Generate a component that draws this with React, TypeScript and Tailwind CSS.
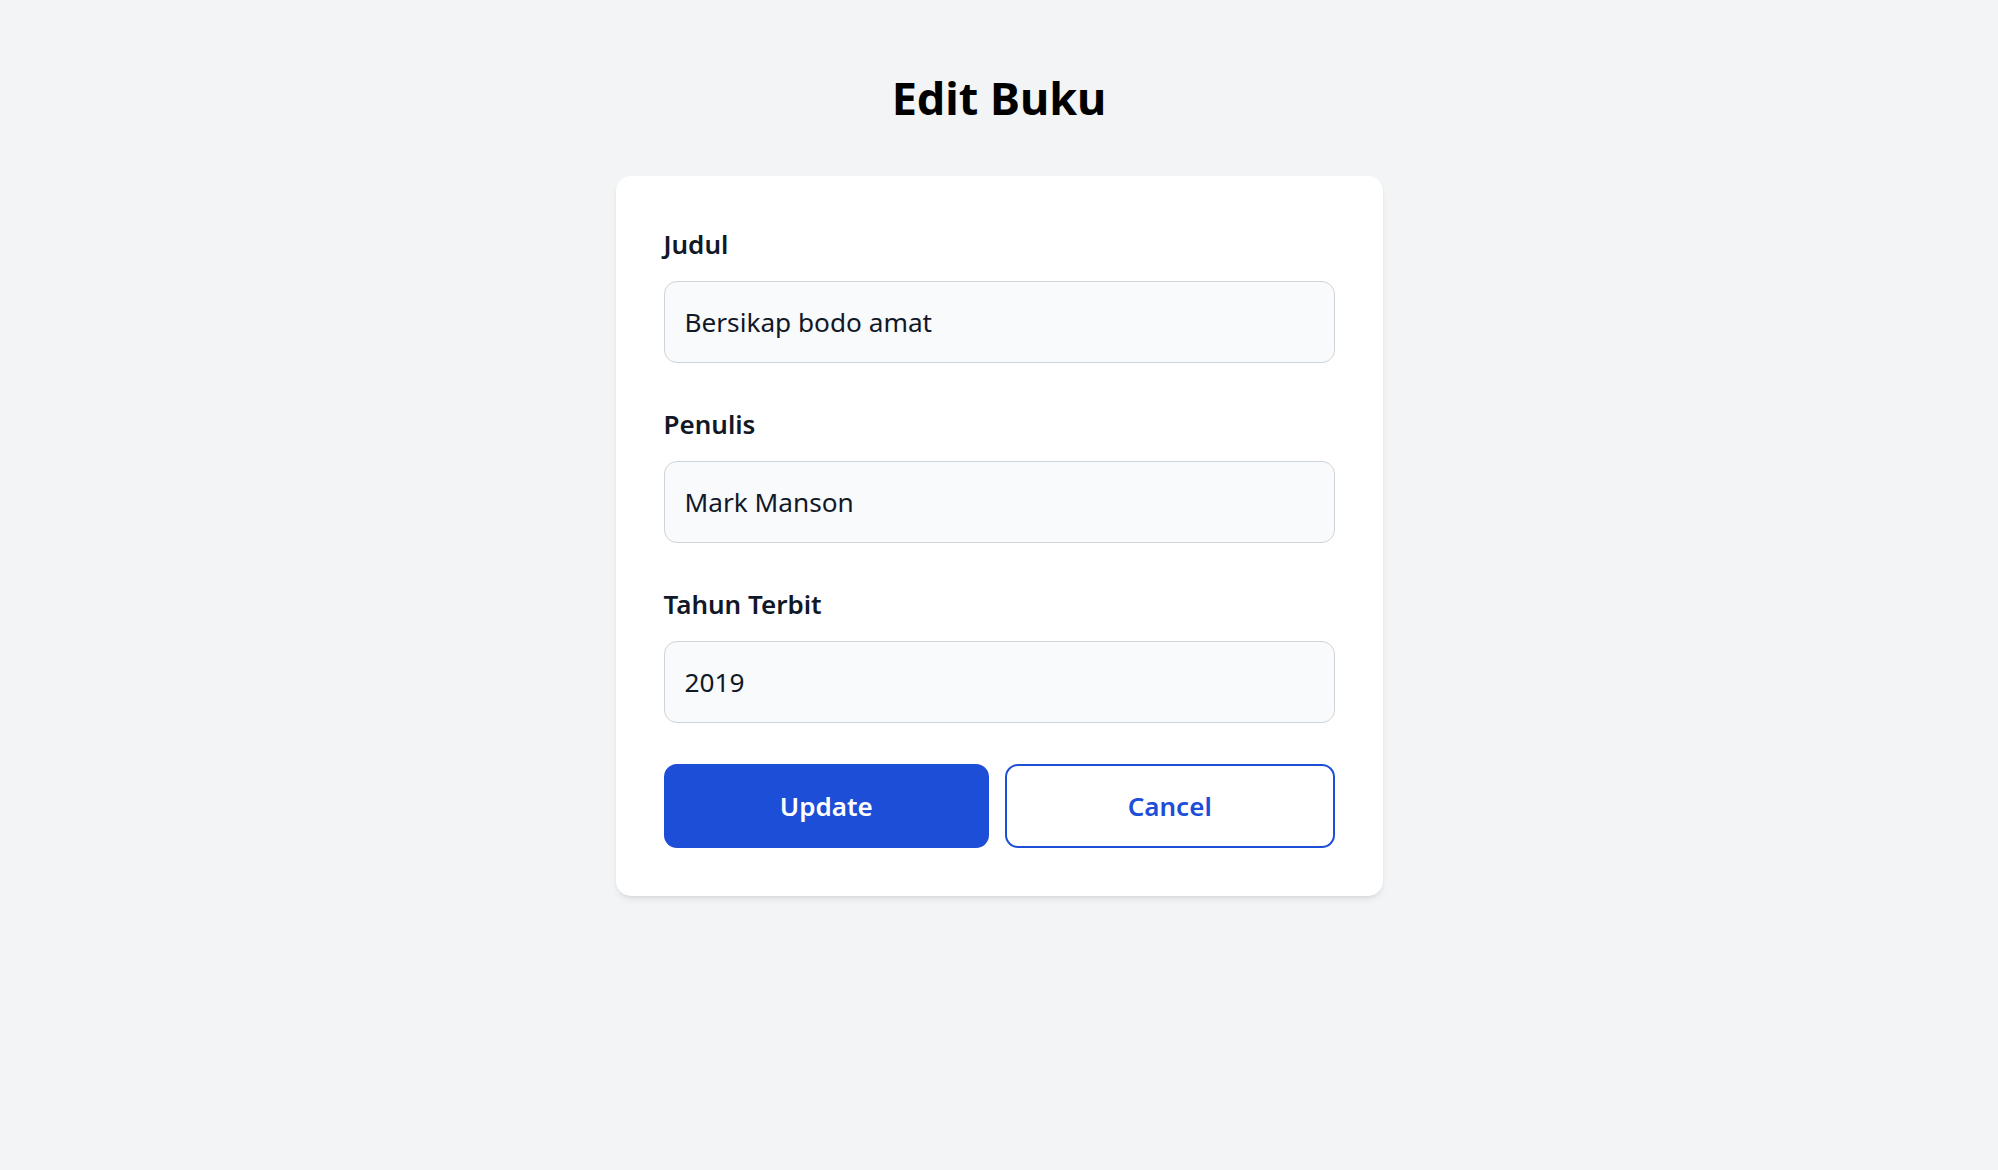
import { useState, type FormEvent } from 'react';

const FONT = { fontFamily: '"Noto Sans", "Open Sans", sans-serif' };

type Field = { key: 'judul' | 'penulis' | 'tahun'; label: string };

const FIELDS: Field[] = [
  { key: 'judul', label: 'Judul' },
  { key: 'penulis', label: 'Penulis' },
  { key: 'tahun', label: 'Tahun Terbit' },
];

export default function App() {
  const [form, setForm] = useState({
    judul: 'Bersikap bodo amat',
    penulis: 'Mark Manson',
    tahun: '2019',
  });

  const handleSubmit = (event: FormEvent<HTMLFormElement>) => {
    event.preventDefault();
  };

  return (
    <div className="min-h-screen bg-[#f3f4f6] pt-[71px]" style={FONT}>
      <h1 className="text-center text-[45px] font-bold leading-[54px] text-black">Edit Buku</h1>

      <form
        onSubmit={handleSubmit}
        className="mx-auto mt-[51px] w-[767px] rounded-[15px] bg-white p-[48px] shadow-[0_5px_9px_-3px_rgba(0,0,0,0.1),0_2px_5px_-2px_rgba(0,0,0,0.08)]"
      >
        <div className="flex flex-col gap-[41px]">
          {FIELDS.map((field) => (
            <label key={field.key} className="flex flex-col">
              <span className="text-[26px] font-semibold leading-[40px] text-[#111827]">{field.label}</span>
              <input
                type="text"
                value={form[field.key]}
                onChange={(event) => setForm((prev) => ({ ...prev, [field.key]: event.target.value }))}
                className="mt-[17px] h-[82px] w-full rounded-[13px] border-[1.5px] border-[#cfd3da] bg-[#f9fafb] px-[20px] text-[26.2px] text-[#111827] outline-none"
                style={FONT}
              />
            </label>
          ))}

          <div className="flex gap-[16px]">
            <button
              type="submit"
              className="h-[84px] flex-1 rounded-[13px] bg-[#1d4ed8] text-[26px] font-semibold text-white"
              style={FONT}
            >
              Update
            </button>
            <button
              type="button"
              className="h-[84px] flex-1 rounded-[13px] border-[2px] border-[#1d4ed8] bg-white text-[26px] font-semibold text-[#1d4ed8]"
              style={FONT}
            >
              Cancel
            </button>
          </div>
        </div>
      </form>
    </div>
  );
}
